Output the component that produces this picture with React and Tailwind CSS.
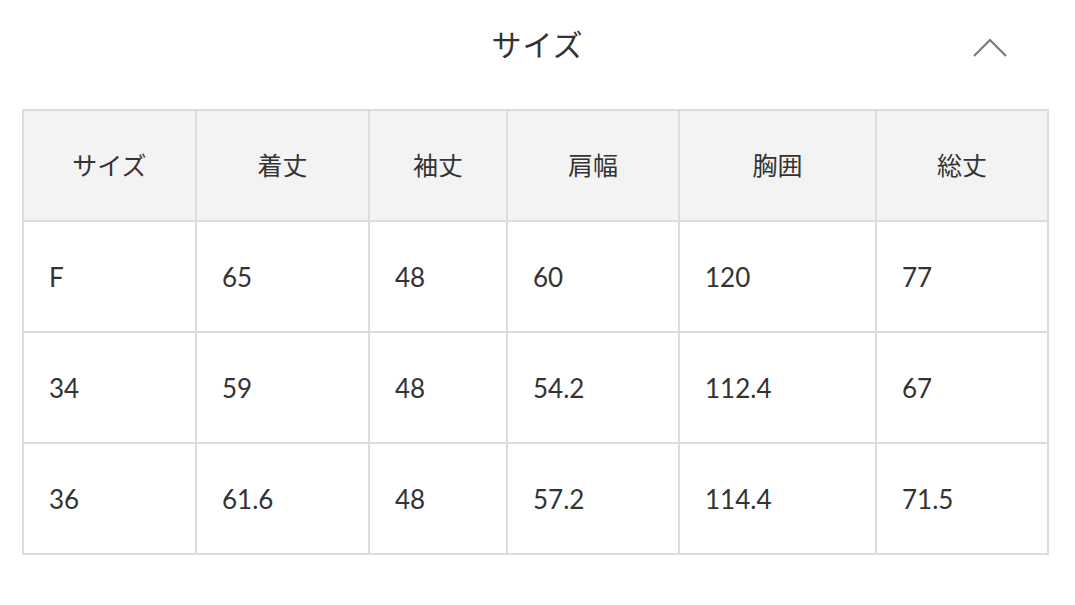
import React from "react";

const headers = ["サイズ", "着丈", "袖丈", "肩幅", "胸囲", "総丈"];
const rows = [
  ["F", "65", "48", "60", "120", "77"],
  ["34", "59", "48", "54.2", "112.4", "67"],
  ["36", "61.6", "48", "57.2", "114.4", "71.5"],
];

export default function App() {
  return (
    <div
      className="w-[1075px] h-[605px] bg-white text-[#333333]"
      style={{ fontFamily: 'Lato, "Noto Sans CJK JP", sans-serif' }}
    >
      <div className="grid grid-cols-[1fr_auto_1fr] h-[109px]">
        <div />
        <div className="pt-[29px] text-[30px] leading-none tracking-[1px]">サイズ</div>
        <div className="flex justify-end pr-[67px] pt-[38px]">
          <svg width="36" height="20" viewBox="0 0 36 20" fill="none">
            <path d="M2 18 L18 2 L34 18" stroke="#7a7a7a" strokeWidth="2.2" />
          </svg>
        </div>
      </div>
      <div className="ml-[22px] w-[1027px] grid grid-cols-[171px_171px_136px_170px_195px_170px] auto-rows-[109px] gap-[2px] bg-[#dcdcdc] border-2 border-[#dcdcdc]">
        {headers.map((h) => (
          <div
            key={h}
            className="bg-[#f3f3f3] flex items-center justify-center text-[25px] leading-none"
          >
            {h}
          </div>
        ))}
        {rows.map((r, i) =>
          r.map((c, j) => (
            <div
              key={i + "-" + j}
              className="bg-white flex items-center pl-[25px] text-[26px] leading-none"
            >
              {c}
            </div>
          ))
        )}
      </div>
    </div>
  );
}
